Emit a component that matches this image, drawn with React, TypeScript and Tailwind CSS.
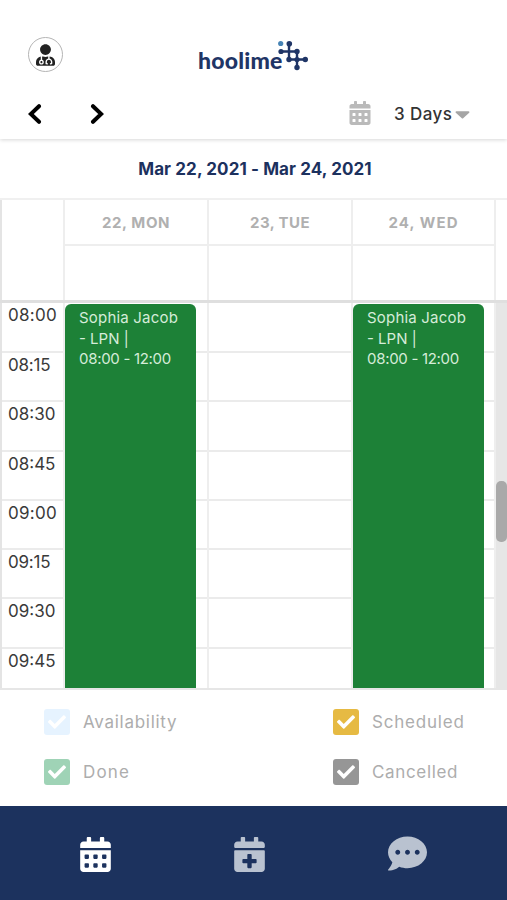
// src/pages/Schedule/Schedule.tsx
import React from 'react';
import { FaCalendarAlt, FaCalendarPlus, FaCaretDown, FaCheck, FaCommentDots, FaUserMd } from 'react-icons/fa';

interface Shift {
    title: string;
    role: string;
    time: string;
}

interface Day {
    label: string;
    tracking: string;
    shift?: Shift;
}

const shift: Shift = { title: 'Sophia Jacob', role: '- LPN |', time: '08:00 - 12:00' };

const days: Day[] = [
    { label: '22, MON', tracking: 'tracking-[0.6px]', shift },
    { label: '23, TUE', tracking: 'tracking-[0.4px]' },
    { label: '24, WED', tracking: 'tracking-[1.1px]', shift },
];

const slots = [
    { time: '08:00', tracking: 'tracking-[0.3px]' },
    { time: '08:15', tracking: 'tracking-[-0.2px]' },
    { time: '08:30', tracking: 'tracking-[0px]' },
    { time: '08:45', tracking: 'tracking-[0px]' },
    { time: '09:00', tracking: 'tracking-[0.3px]' },
    { time: '09:15', tracking: 'tracking-[-0.2px]' },
    { time: '09:30', tracking: 'tracking-[0px]' },
    { time: '09:45', tracking: 'tracking-[0px]' },
];

const legend = [
    { label: 'Availability', color: 'bg-[#e6f3ff]', tracking: 'tracking-[0.72px]' },
    { label: 'Scheduled', color: 'bg-[#e6ba43]', tracking: 'tracking-[0.8px]' },
    { label: 'Done', color: 'bg-[#9fd3b6]', tracking: 'tracking-[1.2px]' },
    { label: 'Cancelled', color: 'bg-[#969696]', tracking: 'tracking-[0.65px]' },
];

const Logo: React.FC = () => (
    <div className="flex items-start text-[#1f3566]">
        <span className="mt-[7px] ml-[1px] w-[85px] font-['Lato',sans-serif] text-[23px] leading-7 font-black tracking-[0.2px]">hoolime</span>
        <svg width="31" height="32" viewBox="0 0 31 32" className="-ml-[6px]" fill="currentColor">
            <path d="M12 4.5v16M20 12.5v16M4 12.5h16M12 20.5h17" stroke="currentColor" strokeWidth="2.4" fill="none" />
            <circle cx="3.7" cy="4.5" r="2.6" fill="#4784b5" />
            <circle cx="12.3" cy="4.7" r="2.8" />
            <circle cx="4" cy="12.5" r="2.6" />
            <circle cx="20" cy="12.5" r="2.7" />
            <circle cx="12" cy="20.5" r="2.7" />
            <circle cx="20" cy="20.5" r="2.6" />
            <circle cx="28.3" cy="20.5" r="2.7" />
            <circle cx="20" cy="28.5" r="2.7" />
        </svg>
    </div>
);

const Chevron: React.FC<{ d: string }> = ({ d }) => (
    <svg width="14" height="22" viewBox="0 0 14 22" fill="none" stroke="#000" strokeWidth="4" strokeLinecap="round" strokeLinejoin="miter">
        <path d={d} />
    </svg>
);

const App: React.FC = () => {
    return (
        <div className="flex h-[900px] w-[507px] flex-col overflow-hidden bg-white font-['Inter',sans-serif] text-[#333]">
            {/* Header */}
            <div className="shrink-0 shadow-[0_1px_4px_rgba(0,0,0,0.16)]">
                <header className="grid h-[88px] grid-cols-[170px_167px_170px] pt-[37px]">
                    <div className="ml-[28px] flex size-[35px] items-center justify-center rounded-full border-[1.5px] border-[#b5b5b5]">
                        <FaUserMd className="h-[22px] w-[19px] text-[#222]" />
                    </div>
                    <div className="mt-[2px] ml-[27px]">
                        <Logo />
                    </div>
                </header>

                {/* Toolbar */}
                <div className="flex h-[51px] items-center pl-[28px]">
                    <button className="mr-[48px]"><Chevron d="M11 3.2 L2.8 11 L11 18.8" /></button>
                    <button><Chevron d="M3 3.2 L11.2 11 L3 18.8" /></button>
                    <FaCalendarAlt className="ml-[245px] h-[24px] w-[22px] -translate-y-px text-[#bababa]" />
                    <span className="ml-[23px] w-[61px] pt-[2px] text-[17px] font-medium tracking-[0.4px] whitespace-nowrap">3 Days</span>
                    <FaCaretDown className="h-[22px] w-[15px] text-[#a5a5a5]" preserveAspectRatio="none" />
                </div>
            </div>

            <h1 className="h-[59px] shrink-0 pl-[3px] text-center text-[17px] leading-[60px] font-bold tracking-[0.1px] whitespace-nowrap text-[#1c315e]">
                Mar 22, 2021 - Mar 24, 2021
            </h1>

            {/* Day headings */}
            <div className="grid h-[105px] shrink-0 grid-cols-[65px_144px_144px_143px_11px] border-t-2 border-b-3 border-t-[#f0f0f0] border-b-[#dfdfdf]">
                <div className="border-r-2 border-l-2 border-r-[#eeeeee] border-l-[#e4e4e4]" />
                {days.map((day) => (
                    <div key={day.label} className="border-r-2 border-[#eeeeee]">
                        <div className={`h-[46px] border-b-2 border-[#eeeeee] text-center text-[15px] leading-[46px] font-bold text-[#b0b0b0] ${day.tracking}`}>
                            {day.label}
                        </div>
                    </div>
                ))}
            </div>

            {/* Time grid */}
            <div className="grid h-[387px] shrink-0 grid-cols-[65px_144px_144px_143px_11px] overflow-hidden border-b-2 border-[#e6e6e6]">
                <div className="border-r-2 border-l-2 border-r-[#eeeeee] border-l-[#e4e4e4]">
                    {slots.map((slot) => (
                        <div key={slot.time} className={`h-[49.3px] border-b-2 border-[#ebebeb] pl-[6px] text-[17px] leading-[24px] text-[#3a3a3a] first:h-[50px] ${slot.tracking}`}>
                            {slot.time}
                        </div>
                    ))}
                </div>
                {days.map((day) => (
                    <div key={day.label} className="relative border-r-2 border-[#eeeeee]">
                        {slots.map((slot) => (
                            <div key={slot.time} className="h-[49.3px] border-b-2 border-[#ebebeb] first:h-[50px]" />
                        ))}
                        {day.shift && (
                            <div className="absolute top-[1px] left-0 h-[400px] w-[131px] rounded-[6px] bg-[#1d8137] pt-[4px] pl-[14px] text-[15px] leading-[20.7px] whitespace-nowrap text-[#d5ecd9]">
                                <p className="tracking-[0.2px]">{day.shift.title}</p>
                                <p>{day.shift.role}</p>
                                <p className="tracking-[-0.3px]">{day.shift.time}</p>
                            </div>
                        )}
                    </div>
                ))}
                <div className="bg-[#e6e6e6]">
                    <div className="mt-[178px] h-[61px] rounded-[5px] bg-[#a9a9a9]" />
                </div>
            </div>

            {/* Legend */}
            <div className="grid h-[116px] shrink-0 grid-cols-[289px_1fr] content-start gap-y-[24px] pt-[19px] pl-[44px]">
                {legend.map((item) => (
                    <div key={item.label} className="flex h-[26px] items-center">
                        <span className={`mr-[13px] flex size-[26px] items-center justify-center rounded-[3px] ${item.color}`}>
                            <FaCheck className="size-[18px] text-white" />
                        </span>
                        <span className={`pt-[2px] text-[17px] text-[#adadad] ${item.tracking}`}>{item.label}</span>
                    </div>
                ))}
            </div>

            {/* Bottom navigation */}
            <nav className="flex flex-1 items-start bg-[#1c325e] pt-[31px]">
                <FaCalendarAlt className="ml-[80px] h-[35px] w-[31px] text-white" />
                <FaCalendarPlus className="ml-[123px] h-[35px] w-[31px] text-[#b9c2d0]" />
                <FaCommentDots className="-mt-[3px] ml-[123px] h-[39px] w-[39px] text-[#b9c2d0]" />
            </nav>
        </div>
    );
};

export default App;
